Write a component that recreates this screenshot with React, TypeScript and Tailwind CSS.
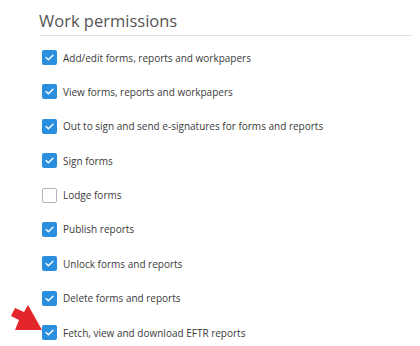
import React from 'react';

const permissions: { label: string; checked: boolean }[] = [
  { label: 'Add/edit forms, reports and workpapers', checked: true },
  { label: 'View forms, reports and workpapers', checked: true },
  { label: 'Out to sign and send e-signatures for forms and reports', checked: true },
  { label: 'Sign forms', checked: true },
  { label: 'Lodge forms', checked: false },
  { label: 'Publish reports', checked: true },
  { label: 'Unlock forms and reports', checked: true },
  { label: 'Delete forms and reports', checked: true },
  { label: 'Fetch, view and download EFTR reports', checked: true },
];

const Checkbox: React.FC<{ checked: boolean }> = ({ checked }) =>
  checked ? (
    <span className="flex h-[15px] w-[15px] shrink-0 items-center justify-center rounded-[2px] bg-[#2b8fe0]">
      <svg width="9" height="7" viewBox="0 0 9 7" fill="none">
        <path d="M1 3.6 L3.4 5.8 L8 1.2" stroke="white" strokeWidth="1.4" strokeLinecap="round" strokeLinejoin="round" />
      </svg>
    </span>
  ) : (
    <span className="h-[15px] w-[15px] shrink-0 rounded-[2px] border border-[#b5b5b5] bg-white" />
  );

const App: React.FC = () => {
  return (
    <div className="relative h-[346px] w-[420px] bg-white font-['Open_Sans',sans-serif]">
      <div className="pl-[39px] pr-[8px] pt-[10px]">
        <h2 className="border-b border-[#e2e2e2] pb-[3px] text-[16.5px] font-normal leading-[22px] text-[#555]">Work permissions</h2>
        <ul className="flex flex-col gap-[19.4px] pl-[3px] pt-[14px]">
          {permissions.map((p) => (
            <li key={p.label} className="flex h-[15px] items-center gap-[6px]">
              <Checkbox checked={p.checked} />
              <span className="text-[10px] leading-none text-[#3a3a3a]">{p.label}</span>
            </li>
          ))}
        </ul>
      </div>
      {/* red pointer arrow */}
      <svg className="absolute left-0 top-[300px]" width="50" height="40" viewBox="0 0 50 40">
        <polygon points="42,30 28,5 24,12 15,8 11,16 19,20 15,30" fill="#e3262b" />
      </svg>
    </div>
  );
};

export default App;
